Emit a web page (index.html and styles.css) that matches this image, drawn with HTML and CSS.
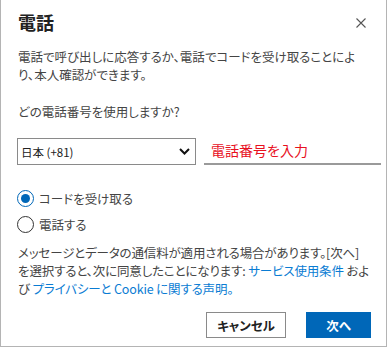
FILE: index.html
```html
<!DOCTYPE html>
<html lang="ja">
<head>
  <meta charset="UTF-8" />
  <meta name="viewport" content="width=device-width, initial-scale=1.0" />
  <title>電話</title>
  <link rel="stylesheet" href="styles.css">
</head>
<body>
  <div class="dialog">
    <!-- ヘッダー -->
    <div class="cabecera">
      <h1 class="titulo">電話</h1>
      <span class="cerrar">
        <svg width="10" height="10" viewBox="0 0 10 10">
          <path d="M0.5 0.5 L9.5 9.5 M9.5 0.5 L0.5 9.5" stroke="#555" stroke-width="1.1" fill="none" />
        </svg>
      </span>
    </div>

    <p class="texto">電話で呼び出しに応答するか、電話でコードを受け取ることによ<br>り、本人確認ができます。</p>

    <p class="pregunta">どの電話番号を使用しますか?</p>

    <div class="fila-telefono">
      <div class="selector">
        <select class="pais">
          <option>日本 (+81)</option>
        </select>
        <svg class="chevron" width="11" height="7" viewBox="0 0 11 7">
          <path d="M1 1 L5.5 5.5 L10 1" stroke="#111" stroke-width="2" fill="none" />
        </svg>
      </div>
      <input class="numero" type="tel" placeholder="電話番号を入力" />
    </div>

    <div class="opciones">
      <label class="opcion">
        <span class="radio activo"></span>
        <span>コードを受け取る</span>
      </label>
      <label class="opcion">
        <span class="radio"></span>
        <span>電話する</span>
      </label>
    </div>

    <p class="aviso">メッセージとデータの通信料が適用される場合があります。[次へ]<br>を選択すると、次に同意したことになります: <a href="#">サービス使用条件</a> およ<br>び <a href="#">プライバシーと Cookie に関する声明。</a></p>

    <div class="botones">
      <button class="btn btn-cancelar">キャンセル</button>
      <button class="btn btn-siguiente">次へ</button>
    </div>
  </div>
</body>
</html>
```

FILE: styles.css
```css
body {
  margin: 0;
  background: #ffffff;
  font-family: "Noto Sans CJK JP", "Noto Sans", sans-serif;
  font-feature-settings: "palt";
  color: #444;
}

.dialog {
  width: 385px;
  height: 346px;
  border: 1px solid #b4b4b4;
  border-top: none;
  box-sizing: content-box;
  padding: 0;
}

.cabecera {
  display: flex;
  align-items: center;
  justify-content: space-between;
  padding: 10px 20px 0 17px;
  height: 24px;
}

.titulo {
  margin: 0;
  font-size: 18px;
  line-height: 24px;
  font-weight: 700;
  color: #222;
}

.cerrar {
  display: flex;
  margin-top: 2px;
}

.texto {
  margin: 14px 0 0 17px;
  font-size: 12.5px;
  line-height: 18px;
  white-space: nowrap;
}

.pregunta {
  margin: 19px 0 0 17px;
  font-size: 12.5px;
  line-height: 18px;
}

.fila-telefono {
  display: flex;
  align-items: flex-end;
  gap: 8px;
  margin: 16px 0 0 16px;
}

.selector {
  position: relative;
  width: 179px;
}

.pais {
  appearance: none;
  width: 100%;
  height: 27px;
  border: 1px solid #8a8a8a;
  border-radius: 0;
  background: #fff;
  font-family: inherit;
  font-feature-settings: "palt";
  font-size: 11.5px;
  color: #222;
  padding: 0 0 0 3px;
  margin: 0;
}

.chevron {
  position: absolute;
  right: 6px;
  top: 10px;
}

.numero {
  width: 170px;
  height: 26px;
  border: none;
  border-bottom: 2px solid #9a9a9a;
  padding: 0 0 0 7px;
  margin: 0;
  font-family: inherit;
  font-size: 14px;
  outline: none;
}

.numero::placeholder {
  color: #e8101e;
  font-feature-settings: "palt";
}

.opciones {
  display: flex;
  flex-direction: column;
  margin: 20px 0 0 16px;
}

.opcion {
  display: flex;
  align-items: center;
  gap: 5px;
  height: 26px;
  font-size: 12.5px;
  color: #444;
}

.radio {
  width: 15px;
  height: 15px;
  border: 1px solid #333;
  border-radius: 50%;
  box-sizing: content-box;
  display: flex;
  align-items: center;
  justify-content: center;
}

.radio.activo {
  border-color: #0067b8;
}

.radio.activo::after {
  content: "";
  width: 9px;
  height: 9px;
  border-radius: 50%;
  background: #0067b8;
}

.aviso {
  margin: 7px 0 0 17px;
  font-size: 12.5px;
  line-height: 18px;
  letter-spacing: -0.15px;
  white-space: nowrap;
}

.aviso a {
  color: #0a7cd3;
  text-decoration: none;
}

.botones {
  display: flex;
  justify-content: flex-end;
  gap: 20px;
  margin: 14px 15px 0 0;
}

.btn {
  height: 26px;
  font-family: inherit;
  font-feature-settings: "palt";
  font-size: 12.5px;
  font-weight: 700;
  border-radius: 0;
  padding: 0;
  cursor: pointer;
}

.btn-cancelar {
  width: 80px;
  background: #fff;
  border: 1px solid #8a8a8a;
  color: #222;
}

.btn-siguiente {
  width: 65px;
  background: #0067b8;
  border: 1px solid #0067b8;
  color: #fff;
}
```
